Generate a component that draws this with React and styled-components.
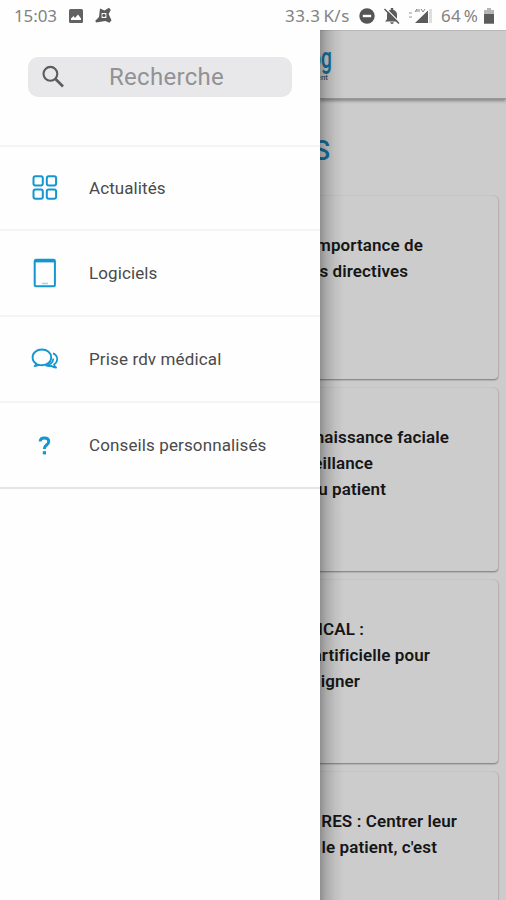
import React from "react";
import styled, { createGlobalStyle } from "styled-components";

const GlobalStyle = createGlobalStyle`
  *, *::before, *::after { box-sizing: border-box; }
  body { margin: 0; background: #fff; font-family: Roboto, "Liberation Sans", sans-serif; }
`;

const Screen = styled.div`
  width: 506px;
  height: 900px;
  overflow: hidden;
  display: flex;
  flex-direction: column;
  background: #fefefe;
`;

const StatusBar = styled.header`
  height: 30px;
  flex: none;
  display: flex;
  align-items: center;
  padding: 1px 12px 0 14px;
  color: #828282;
  font: 400 17px/28px "Noto Sans", sans-serif;
  white-space: nowrap;
`;

const StatusText = styled.span`
  width: ${(p) => p.$width}px;
  margin-left: ${(p) => p.$gap || 0}px;
  letter-spacing: ${(p) => p.$spacing || 0}px;
  word-spacing: ${(p) => p.$words || 0}px;
`;

const StatusIcon = styled.svg`
  display: block;
  flex: none;
  margin-left: ${(p) => p.$gap}px;
`;

const Spacer = styled.div`
  flex: 1;
`;

const Body = styled.div`
  flex: 1;
  min-height: 0;
  display: grid;
  grid-template-columns: 320px 186px;
`;

const Drawer = styled.nav`
  background: #fefefe;
  overflow: hidden;
`;

const SearchArea = styled.div`
  height: 117px;
  padding: 27px 28px 0;
  border-bottom: 2px solid #f4f4f4;
`;

const SearchBox = styled.label`
  height: 40px;
  display: flex;
  align-items: center;
  gap: 43px;
  padding-left: 14px;
  border-radius: 10px;
  background: #e8e8ea;
  width: 264px;
`;

const SearchText = styled.span`
  color: #929294;
  font-size: 24px;
  line-height: 40px;
  letter-spacing: 0.3px;
`;

const MenuItem = styled.a`
  height: ${(p) => p.$height}px;
  display: flex;
  align-items: center;
  border-bottom: ${(p) => (p.$last ? "2px solid #e5e5e5" : "2px solid #f4f4f4")};
  color: #4a4a4a;
  font-size: 17px;
  line-height: 24px;
  letter-spacing: ${(p) => p.$spacing}px;
`;

const IconSlot = styled.span`
  width: 89px;
  padding-left: 30px;
  flex: none;
  svg { display: block; }
`;

const Content = styled.main`
  position: relative;
  overflow: hidden;
  background: #cccccc;
  &::after {
    content: "";
    position: absolute;
    inset: 0 auto 0 0;
    width: 24px;
    background: linear-gradient(90deg, rgba(0,0,0,.3), rgba(0,0,0,.17) 25%, rgba(0,0,0,.06) 62%, transparent);
  }
`;

const AppBar = styled.div`
  height: 69px;
  padding-top: 14px;
  border-top: 1px solid #b9b9b9;
  border-bottom: 1px solid #999;
  box-shadow: 0 2px 3px rgba(0,0,0,.35);
`;

const ClippedLine = styled.div`
  width: ${(p) => p.$width}px;
  display: flex;
  justify-content: flex-end;
  white-space: nowrap;
`;

const LogoLine = styled(ClippedLine)`
  color: #14729f;
  font-size: 29px;
  font-weight: 500;
  line-height: 26px;
  height: 29px;
`;

const LogoGlyphs = styled.span`
  transform: scaleX(0.66);
  transform-origin: right;
`;

const TagLine = styled(ClippedLine)`
  color: #555;
  font-size: 8px;
  line-height: 8px;
  font-weight: 500;
`;

const Heading = styled(ClippedLine)`
  height: 97px;
  padding-top: 35px;
  color: #14729f;
  font-size: 27px;
  font-weight: 500;
  line-height: 34px;
`;

const Card = styled.article`
  height: 183px;
  margin: 0 8px 9px -12px;
  padding: 36px 0 0 12px;
  border-radius: 4px;
  background: #cccccc;
  box-shadow: 0 1px 2px rgba(0,0,0,.42), 0 0 1px rgba(0,0,0,.2);
`;

const TitleLine = styled(ClippedLine)`
  color: #161616;
  font-size: 17px;
  font-weight: 600;
  line-height: 26px;
  letter-spacing: 0.1px;
`;

const SearchIcon = () => (
  <svg width="24" height="24" viewBox="0 0 24 24" fill="none" stroke="#5c5c5e" strokeWidth="2.1">
    <circle cx="8.4" cy="8.8" r="6.9" />
    <path d="M13.5 14l7.5 7.5" strokeWidth="2.7" />
  </svg>
);

const GridIcon = () => (
  <svg width="30" height="30" viewBox="0 0 30 30" fill="none" stroke="#1596cf" strokeWidth="2">
    <rect x="3.5" y="3.2" width="9.3" height="9.3" rx="2" />
    <rect x="16.8" y="3.2" width="9.3" height="9.3" rx="2" />
    <rect x="3.5" y="16.5" width="9.3" height="9.3" rx="2" />
    <rect x="16.8" y="16.5" width="9.3" height="9.3" rx="2" />
  </svg>
);

const TabletIcon = () => (
  <svg width="30" height="30" viewBox="0 0 30 30" fill="none" stroke="#1596cf" strokeWidth="2">
    <rect x="4.7" y="1.7" width="20.2" height="26.6" rx="1.5" />
    <path d="M5 3h20" strokeWidth="2.8" />
    <path d="M12 25.5h6" strokeWidth="1.5" opacity=".4" />
  </svg>
);

const ChatIcon = () => (
  <svg width="30" height="30" viewBox="0 0 30 30" fill="none" stroke="#1596cf" strokeWidth="1.9" strokeLinejoin="round">
    <path d="M6.8 20C4.1 18.4 2.6 16.2 2.6 13.4c0-4.7 4.1-7.9 9.3-7.9s9.3 3.2 9.3 7.9-4.1 7.8-9.3 7.8c-1.2 0-2.2-.1-3.1-.4-1.2.8-2.6 1.2-4.1 1.2 1.1-.6 1.7-1.2 2.1-2z" />
    <path d="M22.9 9.4c2.9 1.1 4.3 3.1 4.3 5.7 0 2.5-1.2 4.3-3.2 5.5.3 1.3 1 2.2 2.2 3-2.2-.1-3.6-.7-4.6-1.7-2 .4-3.7.3-5.3-.2 4.1-.9 6.6-3.5 7.1-7" strokeWidth="1.7" />
  </svg>
);

const QuestionIcon = () => (
  <svg width="30" height="30" viewBox="0 0 30 30" fill="none" stroke="#1596cf" strokeWidth="3">
    <path d="M10.2 11.6C10.2 9 11.8 7.9 14.4 7.9c2.7 0 4.3 1.3 4.3 3.5 0 3.8-4.4 3.4-4.4 7.5" />
    <rect x="12.8" y="21.2" width="3.2" height="3.2" fill="#1596cf" stroke="none" />
  </svg>
);

const menu = [
  { label: "Actualités", Icon: GridIcon, height: 84, spacing: 0.08 },
  { label: "Logiciels", Icon: TabletIcon, height: 86, spacing: 0.1 },
  { label: "Prise rdv médical", Icon: ChatIcon, height: 86, spacing: 0.13 },
  { label: "Conseils personnalisés", Icon: QuestionIcon, height: 86, spacing: 0.12 },
];

const cards = [
  [["importance de", 103], ["es directives", 88]],
  [["naissance faciale", 129], ["eillance", 53], ["du patient", 66]],
  [["ICAL :", 44], ["artificielle pour", 110], ["igner", 40]],
  [["RES : Centrer leur", 137], ["le patient, c'est", 117]],
];

export default function App() {
  return (
    <>
      <GlobalStyle />
      <Screen>
        <StatusBar>
          <StatusText $width={44} $spacing={-0.1}>15:03</StatusText>
          <StatusIcon $gap={11} width="14" height="14" viewBox="0 0 14 14">
            <rect width="14" height="14" rx="1.5" fill="#626262" />
            <path d="M2 11V9.5L4.5 7 6 9l3-3.5 3 4V11z" fill="#fff" />
          </StatusIcon>
          <StatusIcon $gap={12} width="17" height="17" viewBox="0 0 17 17">
            <path d="M5 1.5l4.5 2L14 .8l1.8 2.3L13.6 7l2.9 6.2-2 2.5-4.2-1.6L1 15.5l-.7-1.8L4 10z" fill="#5b5b5b" />
            <path d="M6.6 6h4.8v5H6.6z" fill="#fff" />
            <circle cx="8.9" cy="8.4" r="1.7" fill="#5b5b5b" />
          </StatusIcon>
          <Spacer />
          <StatusText $width={65} $spacing={0.45} $words={-2}>33.3 K/s</StatusText>
          <StatusIcon $gap={9} width="16" height="16" viewBox="0 0 16 16">
            <circle cx="8" cy="8" r="7.7" fill="#555" />
            <rect x="3.8" y="6.8" width="8.4" height="2.4" fill="#fff" />
          </StatusIcon>
          <StatusIcon $gap={8} width="18" height="18" viewBox="0 0 18 18">
            <path d="M2 14.5l2-2.3V7.8C4 5 5.6 3.2 7.8 2.7V1h2.4v1.7c2.3.5 3.8 2.4 3.8 5.1v4.4l2 2.3zM7.2 15.3h3.6a1.8 1.8 0 01-3.6 0z" fill="#5b5b5b" />
            <path d="M2.5 1.2L17 15.7" stroke="#fff" strokeWidth="1.2" />
            <path d="M1.5 2L16 16.5" stroke="#5b5b5b" strokeWidth="1.5" />
          </StatusIcon>
          <StatusIcon $gap={7} width="25" height="18" viewBox="0 0 25 18">
            <path d="M1 6h3M1 10h3" stroke="#bbb" strokeWidth="1.5" />
            <path d="M7 16L20 3.5V16z" fill="#5b5b5b" />
            <path d="M21 2h3v14h-3z" fill="#dedede" />
            <path d="M7 5l2-3v3M11 2v3M13 2l2 3 2-3" fill="none" stroke="#888" />
          </StatusIcon>
          <StatusText $gap={8} $width={39} $spacing={0.3} $words={-2}>64 %</StatusText>
          <StatusIcon $gap={4} width="10" height="16" viewBox="0 0 10 16">
            <path d="M3 0h4v2h3v14H0V2h3z" fill="#b5b5b5" />
            <path d="M0 6h10v9.5H0z" fill="#5b5b5b" />
          </StatusIcon>
        </StatusBar>
        <Body>
          <Drawer>
            <SearchArea>
              <SearchBox>
                <SearchIcon />
                <SearchText>Recherche</SearchText>
              </SearchBox>
            </SearchArea>
            {menu.map(({ label, Icon, height, spacing }, i) => (
              <MenuItem key={label} $height={height} $spacing={spacing} $last={i === menu.length - 1}>
                <IconSlot><Icon /></IconSlot>
                {label}
              </MenuItem>
            ))}
          </Drawer>
          <Content>
            <AppBar>
              <LogoLine $width={12}><LogoGlyphs>og</LogoGlyphs></LogoLine>
              <TagLine $width={8}>ent</TagLine>
            </AppBar>
            <Heading $width={10}>S</Heading>
            {cards.map((lines, i) => (
              <Card key={i}>
                {lines.map(([text, width]) => (
                  <TitleLine key={text} $width={width}>{text}</TitleLine>
                ))}
              </Card>
            ))}
          </Content>
        </Body>
      </Screen>
    </>
  );
}
